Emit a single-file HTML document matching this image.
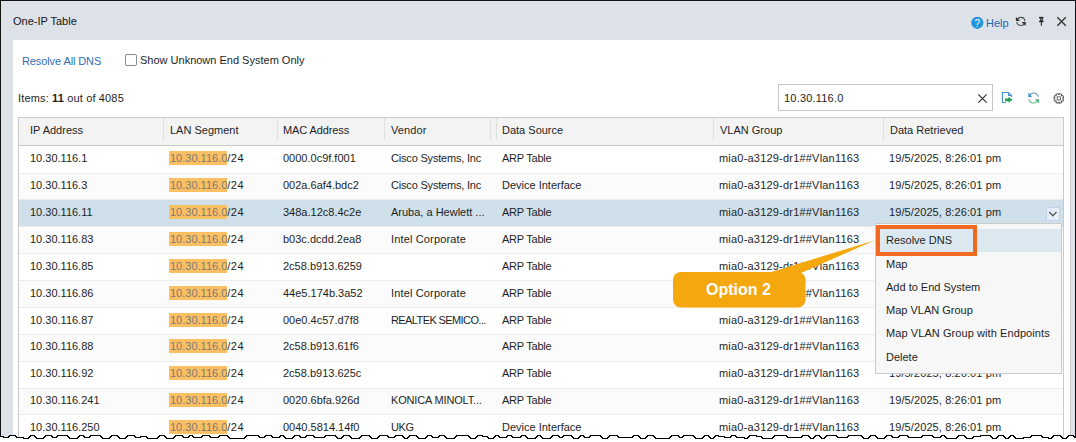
<!DOCTYPE html>
<html><head><meta charset="utf-8"><style>
*{margin:0;padding:0;box-sizing:border-box}
html,body{width:1076px;height:442px;overflow:hidden;background:#fff}
body{position:relative;font-family:"Liberation Sans",sans-serif;font-size:11px;color:#1e1e1e}
.t{position:absolute;white-space:nowrap;line-height:13px}
.num{letter-spacing:0.2px}
.abs{position:absolute}
.win{position:absolute;left:0;top:0;width:1076px;height:442px;background:#dde2e9;border-top:1px solid #111;border-left:1px solid #111;border-right:1px solid #111}
.panel{position:absolute;left:13px;top:40px;width:1058px;height:402px;background:#fff;border-right:1px solid #c8ccd2}
.tbl{position:absolute;left:18px;top:117px;width:1046px;height:330px;border:1px solid #c9c9c9;border-bottom:none}
.hdr{position:absolute;left:19px;top:118px;width:1044px;height:27px;background:#f3f3f3}
.hline{position:absolute;left:18px;top:145px;width:1046px;height:1px;background:#c9c9c9}
.vsep{position:absolute;top:118px;width:1px;height:23px;background:#e0e0e0}
.row{position:absolute;left:19px;width:1044px}
.sep{position:absolute;left:19px;width:1044px;height:1px;background:#ececec}
.hl{position:absolute;left:169px;width:58px;height:14px;background:#fcc062}
.hlt{color:#7d7a74}
.link{color:#2f6fb3}
.menu{position:absolute;left:875px;top:223px;width:187px;height:151px;background:#f7f7f7;border:1px solid #c9c9c9}
</style></head><body>
<div class="win"></div>
<div class="t" style="left:13px;top:15px;color:#141414">One-IP Table</div>
<svg class="abs" style="left:0;top:0" width="1076" height="40">
  <circle cx="977.3" cy="22.8" r="6.1" fill="#2394dc"/>
  <text x="977.4" y="26.5" text-anchor="middle" font-family="Liberation Sans" font-size="10" fill="#fff">?</text>
  <g fill="none" stroke="#4a4a4a" stroke-width="1.1">
    <path d="M1017.3,19.6 C1018.2,18 1019.5,17.4 1021,17.4 C1023.2,17.4 1024.6,18.8 1024.9,21.2"/>
    <path d="M1024.6,23.6 C1023.8,25.1 1022.6,25.5 1021,25.5 C1018.8,25.5 1017.2,24.4 1016.6,22.2"/>
  </g>
  <path d="M1015.9,16.9 L1015.9,21.1 L1020.1,21.1 Z" fill="#333"/>
  <path d="M1025.7,26.1 L1025.7,21.9 L1021.5,21.9 Z" fill="#333"/>
  <g>
    <rect x="1039" y="16.9" width="4.5" height="1.3" fill="#1e1e1e"/>
    <path d="M1040.4,18.2 L1042.6,18.2 L1042.6,20.8 L1040.4,20.8 Z" fill="#8a8a8a" stroke="#2a2a2a" stroke-width="0.8"/>
    <ellipse cx="1041.3" cy="21.4" rx="2.4" ry="0.95" fill="#1e1e1e"/>
    <rect x="1040.85" y="22.2" width="1.1" height="3.5" fill="#2a2a2a"/>
  </g>
  <g stroke="#333" stroke-width="1.3">
    <path d="M1057.3,17.3 L1065.8,25.8 M1065.8,17.3 L1057.3,25.8"/>
  </g>
</svg>
<div class="t link" style="left:986px;top:17px;color:#1d68ad">Help</div>
<div class="panel"></div>
<div class="t link" style="left:22px;top:55px;letter-spacing:-0.1px">Resolve All DNS</div>
<div style="position:absolute;left:125px;top:54px;width:12px;height:12px;border:1px solid #8a8a98;border-radius:2px;background:#fff"></div>
<div class="t" style="left:140px;top:54px">Show Unknown End System Only</div>
<div class="t" style="left:18px;top:92px;letter-spacing:0.15px">Items: <b>11</b> out of 4085</div>
<div style="position:absolute;left:778px;top:84px;width:215px;height:27px;border:1px solid #c6c6c6;background:#fff"></div>
<div class="t num" style="left:784px;top:92px">10.30.116.0</div>
<svg class="abs" style="left:970px;top:84px" width="106" height="30" viewBox="970 84 106 30">
  <path d="M978.3,94.3 L986.7,102.7 M986.7,94.3 L978.3,102.7" stroke="#333" stroke-width="1.2"/>
  <path d="M1006,102.5 L1002.5,102.5 L1002.5,92.5 L1008.5,92.5 L1011.5,95.5 L1011.5,97" fill="none" stroke="#4a90d0" stroke-width="1.1"/>
  <path d="M1008.5,92.5 L1008.5,95.5 L1011.5,95.5" fill="none" stroke="#4a90d0" stroke-width="1.1"/>
  <path d="M1005,98.4 L1008.5,98.4 L1008.5,96.8 L1012.6,99.8 L1008.5,102.8 L1008.5,101.2 L1005,101.2 Z" fill="#21a052"/>
  <path d="M1029.3,96 Q1030.8,93 1033.5,93 Q1036.8,93 1038.4,96.8" fill="none" stroke="#5a9cd6" stroke-width="1.1"/>
  <path d="M1028.3,92.6 L1028.3,96.9 L1032.2,96.9 Z" fill="#4a90d0"/>
  <path d="M1037.8,99.6 Q1036.5,103 1033.5,103 Q1030.2,103 1028.6,99.2" fill="none" stroke="#62c08e" stroke-width="1.1"/>
  <path d="M1038.9,103.6 L1038.9,99.2 L1034.9,99.2 Z" fill="#4cb880"/>
  <g transform="translate(1058.8,98.4) rotate(22.5)">
    <path d="M3.73,-1.14 L4.89,-1.04 L4.89,1.04 L3.73,1.14 L3.44,1.83 L4.19,2.72 L2.72,4.19 L1.83,3.44 L1.14,3.73 L1.04,4.89 L-1.04,4.89 L-1.14,3.73 L-1.83,3.44 L-2.72,4.19 L-4.19,2.72 L-3.44,1.83 L-3.73,1.14 L-4.89,1.04 L-4.89,-1.04 L-3.73,-1.14 L-3.44,-1.83 L-4.19,-2.72 L-2.72,-4.19 L-1.83,-3.44 L-1.14,-3.73 L-1.04,-4.89 L1.04,-4.89 L1.14,-3.73 L1.83,-3.44 L2.72,-4.19 L4.19,-2.72 L3.44,-1.83 Z" fill="none" stroke="#555" stroke-width="0.9"/>
    <rect x="-1.6" y="-1.6" width="3.2" height="3.2" fill="none" stroke="#606060" stroke-width="0.9" transform="rotate(-22.5)"/>
  </g>
</svg>
<div class="tbl"></div>
<div class="hdr"></div>
<div class="hline"></div>
<div class="vsep" style="left:163px"></div>
<div class="vsep" style="left:277px"></div>
<div class="vsep" style="left:384px"></div>
<div class="vsep" style="left:490px"></div>
<div class="vsep" style="left:496px"></div>
<div class="vsep" style="left:713px"></div>
<div class="vsep" style="left:883px"></div>
<div class="t" style="left:30px;top:124px;">IP Address</div>
<div class="t" style="left:170px;top:124px;">LAN Segment</div>
<div class="t" style="left:283px;top:124px;letter-spacing:-0.1px;">MAC Address</div>
<div class="t" style="left:391px;top:124px;letter-spacing:0.1px;">Vendor</div>
<div class="t" style="left:502px;top:124px;">Data Source</div>
<div class="t" style="left:720px;top:124px;">VLAN Group</div>
<div class="t" style="left:890px;top:124px;">Data Retrieved</div>
<div class="sep" style="top:173px"></div><div class="t" style="left:30px;top:152px;">10.30.116.1</div><div class="hl" style="top:151px"></div><div class="t" style="left:170px;top:152px;"><span class="hlt">10.30.116.0</span><span style="letter-spacing:0.5px">/24</span></div><div class="t" style="left:283px;top:152px;">0000.0c9f.f001</div><div class="t" style="left:391px;top:152px;letter-spacing:-0.19px;">Cisco Systems, Inc</div><div class="t" style="left:502px;top:152px;letter-spacing:-0.25px;">ARP Table</div><div class="t" style="left:719px;top:152px;letter-spacing:0.2px;">mia0-a3129-dr1##Vlan1163</div><div class="t" style="left:889px;top:152px;letter-spacing:0.1px;">19/5/2025, 8:26:01 pm</div><div class="row" style="top:174px;height:25px;background:#fbfbfb;"></div><div class="sep" style="top:199px"></div><div class="t" style="left:30px;top:179px;">10.30.116.3</div><div class="hl" style="top:178px"></div><div class="t" style="left:170px;top:179px;"><span class="hlt">10.30.116.0</span><span style="letter-spacing:0.5px">/24</span></div><div class="t" style="left:283px;top:179px;">002a.6af4.bdc2</div><div class="t" style="left:391px;top:179px;letter-spacing:-0.19px;">Cisco Systems, Inc</div><div class="t" style="left:502px;top:179px;">Device Interface</div><div class="t" style="left:719px;top:179px;letter-spacing:0.2px;">mia0-a3129-dr1##Vlan1163</div><div class="t" style="left:889px;top:179px;letter-spacing:0.1px;">19/5/2025, 8:26:01 pm</div><div class="row" style="top:200px;height:26px;background:#cfe0ea;"></div><div class="sep" style="top:226px"></div><div class="t" style="left:30px;top:206px;">10.30.116.11</div><div class="hl" style="top:205px"></div><div class="t" style="left:170px;top:206px;"><span class="hlt">10.30.116.0</span><span style="letter-spacing:0.5px">/24</span></div><div class="t" style="left:283px;top:206px;">348a.12c8.4c2e</div><div class="t" style="left:391px;top:206px;">Aruba, a Hewlett ...</div><div class="t" style="left:502px;top:206px;letter-spacing:-0.25px;">ARP Table</div><div class="t" style="left:719px;top:206px;letter-spacing:0.2px;">mia0-a3129-dr1##Vlan1163</div><div class="t" style="left:889px;top:206px;letter-spacing:0.1px;">19/5/2025, 8:26:01 pm</div><div class="row" style="top:227px;height:26px;background:#fbfbfb;"></div><div class="sep" style="top:253px"></div><div class="t" style="left:30px;top:233px;">10.30.116.83</div><div class="hl" style="top:232px"></div><div class="t" style="left:170px;top:233px;"><span class="hlt">10.30.116.0</span><span style="letter-spacing:0.5px">/24</span></div><div class="t" style="left:283px;top:233px;">b03c.dcdd.2ea8</div><div class="t" style="left:391px;top:233px;letter-spacing:0.15px;">Intel Corporate</div><div class="t" style="left:502px;top:233px;letter-spacing:-0.25px;">ARP Table</div><div class="t" style="left:719px;top:233px;letter-spacing:0.2px;">mia0-a3129-dr1##Vlan1163</div><div class="t" style="left:889px;top:233px;letter-spacing:0.1px;">19/5/2025, 8:26:01 pm</div><div class="sep" style="top:280px"></div><div class="t" style="left:30px;top:260px;">10.30.116.85</div><div class="hl" style="top:259px"></div><div class="t" style="left:170px;top:260px;"><span class="hlt">10.30.116.0</span><span style="letter-spacing:0.5px">/24</span></div><div class="t" style="left:283px;top:260px;">2c58.b913.6259</div><div class="t" style="left:502px;top:260px;letter-spacing:-0.25px;">ARP Table</div><div class="t" style="left:719px;top:260px;letter-spacing:0.2px;">mia0-a3129-dr1##Vlan1163</div><div class="t" style="left:889px;top:260px;letter-spacing:0.1px;">19/5/2025, 8:26:01 pm</div><div class="row" style="top:281px;height:26px;background:#fbfbfb;"></div><div class="sep" style="top:307px"></div><div class="t" style="left:30px;top:287px;">10.30.116.86</div><div class="hl" style="top:286px"></div><div class="t" style="left:170px;top:287px;"><span class="hlt">10.30.116.0</span><span style="letter-spacing:0.5px">/24</span></div><div class="t" style="left:283px;top:287px;">44e5.174b.3a52</div><div class="t" style="left:391px;top:287px;letter-spacing:0.15px;">Intel Corporate</div><div class="t" style="left:502px;top:287px;letter-spacing:-0.25px;">ARP Table</div><div class="t" style="left:719px;top:287px;letter-spacing:0.2px;">mia0-a3129-dr1##Vlan1163</div><div class="t" style="left:889px;top:287px;letter-spacing:0.1px;">19/5/2025, 8:26:01 pm</div><div class="sep" style="top:334px"></div><div class="t" style="left:30px;top:314px;">10.30.116.87</div><div class="hl" style="top:313px"></div><div class="t" style="left:170px;top:314px;"><span class="hlt">10.30.116.0</span><span style="letter-spacing:0.5px">/24</span></div><div class="t" style="left:283px;top:314px;">00e0.4c57.d7f8</div><div class="t" style="left:391px;top:314px;letter-spacing:-0.6px;">REALTEK SEMICO...</div><div class="t" style="left:502px;top:314px;letter-spacing:-0.25px;">ARP Table</div><div class="t" style="left:719px;top:314px;letter-spacing:0.2px;">mia0-a3129-dr1##Vlan1163</div><div class="t" style="left:889px;top:314px;letter-spacing:0.1px;">19/5/2025, 8:26:01 pm</div><div class="row" style="top:335px;height:26px;background:#fbfbfb;"></div><div class="sep" style="top:361px"></div><div class="t" style="left:30px;top:340px;">10.30.116.88</div><div class="hl" style="top:339px"></div><div class="t" style="left:170px;top:340px;"><span class="hlt">10.30.116.0</span><span style="letter-spacing:0.5px">/24</span></div><div class="t" style="left:283px;top:340px;">2c58.b913.61f6</div><div class="t" style="left:502px;top:340px;letter-spacing:-0.25px;">ARP Table</div><div class="t" style="left:719px;top:340px;letter-spacing:0.2px;">mia0-a3129-dr1##Vlan1163</div><div class="t" style="left:889px;top:340px;letter-spacing:0.1px;">19/5/2025, 8:26:01 pm</div><div class="sep" style="top:388px"></div><div class="t" style="left:30px;top:367px;">10.30.116.92</div><div class="hl" style="top:366px"></div><div class="t" style="left:170px;top:367px;"><span class="hlt">10.30.116.0</span><span style="letter-spacing:0.5px">/24</span></div><div class="t" style="left:283px;top:367px;">2c58.b913.625c</div><div class="t" style="left:502px;top:367px;letter-spacing:-0.25px;">ARP Table</div><div class="t" style="left:719px;top:367px;letter-spacing:0.2px;">mia0-a3129-dr1##Vlan1163</div><div class="t" style="left:889px;top:367px;letter-spacing:0.1px;">19/5/2025, 8:26:01 pm</div><div class="row" style="top:389px;height:25px;background:#fbfbfb;"></div><div class="sep" style="top:414px"></div><div class="t" style="left:30px;top:394px;">10.30.116.241</div><div class="hl" style="top:393px"></div><div class="t" style="left:170px;top:394px;"><span class="hlt">10.30.116.0</span><span style="letter-spacing:0.5px">/24</span></div><div class="t" style="left:283px;top:394px;">0020.6bfa.926d</div><div class="t" style="left:391px;top:394px;letter-spacing:-0.16px;">KONICA MINOLT...</div><div class="t" style="left:502px;top:394px;letter-spacing:-0.25px;">ARP Table</div><div class="t" style="left:719px;top:394px;letter-spacing:0.2px;">mia0-a3129-dr1##Vlan1163</div><div class="t" style="left:889px;top:394px;letter-spacing:0.1px;">19/5/2025, 8:26:01 pm</div><div class="t" style="left:30px;top:421px;">10.30.116.250</div><div class="hl" style="top:420px"></div><div class="t" style="left:170px;top:421px;"><span class="hlt">10.30.116.0</span><span style="letter-spacing:0.5px">/24</span></div><div class="t" style="left:283px;top:421px;">0040.5814.14f0</div><div class="t" style="left:391px;top:421px;letter-spacing:-0.4px;">UKG</div><div class="t" style="left:502px;top:421px;">Device Interface</div><div class="t" style="left:719px;top:421px;letter-spacing:0.2px;">mia0-a3129-dr1##Vlan1163</div><div class="t" style="left:889px;top:421px;letter-spacing:0.1px;">19/5/2025, 8:26:01 pm</div>
<div class="abs" style="left:1046px;top:207px;width:14px;height:14px;background:#e6edf8;border:1px solid #c3d2e8"></div>
<svg class="abs" style="left:1046px;top:207px" width="14" height="14"><path d="M3.3,5 L6.9,8.7 L10.5,5" fill="none" stroke="#595959" stroke-width="1.35"/></svg>
<div class="menu"></div>
<div class="abs" style="left:876px;top:229px;width:185px;height:23px;background:#dce8f0"></div>
<div class="abs" style="left:876px;top:225px;width:101px;height:31px;border:4px solid #f26a21"></div>
<div class="t" style="left:886px;top:234px;">Resolve DNS</div><div class="t" style="left:886px;top:258px;">Map</div><div class="t" style="left:886px;top:281px;">Add to End System</div><div class="t" style="left:886px;top:304px;">Map VLAN Group</div><div class="t" style="left:886px;top:327px;letter-spacing:0.08px;">Map VLAN Group with Endpoints</div><div class="t" style="left:886px;top:351px;">Delete</div>
<svg class="abs" style="left:0;top:0" width="1076" height="442">
  <path d="M768,273 L801,273 L875,240.2 Z" fill="#f5a80d"/>
  <rect x="673" y="272" width="132.5" height="35.5" rx="8" ry="8" fill="#f5a80d"/>
  <text x="706" y="295" font-family="Liberation Sans" font-weight="bold" font-size="16" fill="#fff">Option 2</text>
  <path d="M0,436.5 L3,436.5 L4,437.5 L8,437.5 L10,435.5 L15,435.5 L17,437.5 L23,437.5 L24,438.5 L28,438.5 L31,435.5 L34,435.5 L37,438.5 L43,438.5 L46,435.5 L51,435.5 L53,437.5 L56,437.5 L58,435.5 L67,435.5 L70,438.5 L77,438.5 L80,435.5 L83,435.5 L85,437.5 L89,437.5 L91,435.5 L100,435.5 L103,438.5 L109,438.5 L112,435.5 L117,435.5 L120,438.5 L125,438.5 L128,435.5 L134,435.5 L136,437.5 L140,437.5 L141,436.5 L146,436.5 L148,438.5 L157,438.5 L160,435.5 L164,435.5 L167,438.5 L173,438.5 L176,435.5 L182,435.5 L184,437.5 L188,437.5 L190,435.5 L192,435.5 L194,437.5 L201,437.5 L203,435.5 L209,435.5 L211,437.5 L218,437.5 L220,435.5 L227,435.5 L230,438.5 L234,438.5 L235,438.5 L244,438.5 L247,435.5 L252,435.5 L253,435.5 L258,435.5 L260,437.5 L264,437.5 L266,435.5 L271,435.5 L273,437.5 L279,437.5 L281,435.5 L283,435.5 L286,438.5 L292,438.5 L295,435.5 L299,435.5 L301,437.5 L305,437.5 L307,435.5 L313,435.5 L315,437.5 L320,437.5 L321,437.5 L324,437.5 L326,435.5 L335,435.5 L338,438.5 L341,438.5 L344,435.5 L349,435.5 L352,438.5 L359,438.5 L362,435.5 L369,435.5 L372,438.5 L377,438.5 L380,435.5 L387,435.5 L389,437.5 L394,437.5 L396,435.5 L402,435.5 L405,438.5 L407,438.5 L410,435.5 L416,435.5 L419,438.5 L425,438.5 L428,435.5 L431,435.5 L433,437.5 L438,437.5 L440,435.5 L444,435.5 L447,438.5 L454,438.5 L457,435.5 L463,435.5 L464,435.5 L468,435.5 L471,438.5 L475,438.5 L478,435.5 L482,435.5 L483,436.5 L487,436.5 L489,438.5 L493,438.5 L496,435.5 L498,435.5 L500,437.5 L506,437.5 L508,435.5 L511,435.5 L513,437.5 L520,437.5 L522,435.5 L525,435.5 L528,438.5 L535,438.5 L538,435.5 L540,435.5 L543,438.5 L550,438.5 L553,435.5 L558,435.5 L560,437.5 L562,437.5 L564,435.5 L571,435.5 L574,438.5 L578,438.5 L581,435.5 L583,435.5 L585,437.5 L589,437.5 L591,435.5 L600,435.5 L603,438.5 L607,438.5 L610,435.5 L617,435.5 L619,437.5 L625,437.5 L626,437.5 L632,437.5 L634,435.5 L638,435.5 L641,438.5 L645,438.5 L648,435.5 L653,435.5 L656,438.5 L659,438.5 L660,438.5 L669,438.5 L672,435.5 L678,435.5 L680,437.5 L682,437.5 L684,435.5 L693,435.5 L696,438.5 L702,438.5 L705,435.5 L708,435.5 L711,438.5 L713,438.5 L716,435.5 L718,435.5 L719,436.5 L724,436.5 L725,437.5 L730,437.5 L732,435.5 L735,435.5 L737,437.5 L744,437.5 L745,438.5 L747,438.5 L750,435.5 L756,435.5 L757,436.5 L761,436.5 L763,438.5 L772,438.5 L775,435.5 L779,435.5 L780,435.5 L786,435.5 L788,437.5 L791,437.5 L792,437.5 L801,437.5 L803,435.5 L808,435.5 L811,438.5 L813,438.5 L816,435.5 L819,435.5 L822,438.5 L824,438.5 L827,435.5 L836,435.5 L838,437.5 L847,437.5 L849,435.5 L851,435.5 L852,435.5 L861,435.5 L864,438.5 L868,438.5 L871,435.5 L875,435.5 L878,438.5 L884,438.5 L887,435.5 L891,435.5 L893,437.5 L898,437.5 L900,435.5 L907,435.5 L909,437.5 L915,437.5 L916,437.5 L921,437.5 L923,435.5 L932,435.5 L934,437.5 L940,437.5 L942,435.5 L944,435.5 L947,438.5 L956,438.5 L959,435.5 L964,435.5 L967,438.5 L972,438.5 L974,436.5 L980,436.5 L981,435.5 L990,435.5 L993,438.5 L996,438.5 L999,435.5 L1003,435.5 L1006,438.5 L1008,438.5 L1011,435.5 L1013,435.5 L1016,438.5 L1023,438.5 L1024,437.5 L1030,437.5 L1032,435.5 L1041,435.5 L1043,437.5 L1048,437.5 L1049,438.5 L1051,438.5 L1054,435.5 L1060,435.5 L1063,438.5 L1066,438.5 L1069,435.5 L1073,435.5 L1075,437.5 L1077,437.5 L1079,435.5 L1086,435.5 L1089,438.5 L1080,450 L0,450 Z" fill="#fff" shape-rendering="crispEdges"/>
  <path d="M0,436.5 L3,436.5 L4,437.5 L8,437.5 L10,435.5 L15,435.5 L17,437.5 L23,437.5 L24,438.5 L28,438.5 L31,435.5 L34,435.5 L37,438.5 L43,438.5 L46,435.5 L51,435.5 L53,437.5 L56,437.5 L58,435.5 L67,435.5 L70,438.5 L77,438.5 L80,435.5 L83,435.5 L85,437.5 L89,437.5 L91,435.5 L100,435.5 L103,438.5 L109,438.5 L112,435.5 L117,435.5 L120,438.5 L125,438.5 L128,435.5 L134,435.5 L136,437.5 L140,437.5 L141,436.5 L146,436.5 L148,438.5 L157,438.5 L160,435.5 L164,435.5 L167,438.5 L173,438.5 L176,435.5 L182,435.5 L184,437.5 L188,437.5 L190,435.5 L192,435.5 L194,437.5 L201,437.5 L203,435.5 L209,435.5 L211,437.5 L218,437.5 L220,435.5 L227,435.5 L230,438.5 L234,438.5 L235,438.5 L244,438.5 L247,435.5 L252,435.5 L253,435.5 L258,435.5 L260,437.5 L264,437.5 L266,435.5 L271,435.5 L273,437.5 L279,437.5 L281,435.5 L283,435.5 L286,438.5 L292,438.5 L295,435.5 L299,435.5 L301,437.5 L305,437.5 L307,435.5 L313,435.5 L315,437.5 L320,437.5 L321,437.5 L324,437.5 L326,435.5 L335,435.5 L338,438.5 L341,438.5 L344,435.5 L349,435.5 L352,438.5 L359,438.5 L362,435.5 L369,435.5 L372,438.5 L377,438.5 L380,435.5 L387,435.5 L389,437.5 L394,437.5 L396,435.5 L402,435.5 L405,438.5 L407,438.5 L410,435.5 L416,435.5 L419,438.5 L425,438.5 L428,435.5 L431,435.5 L433,437.5 L438,437.5 L440,435.5 L444,435.5 L447,438.5 L454,438.5 L457,435.5 L463,435.5 L464,435.5 L468,435.5 L471,438.5 L475,438.5 L478,435.5 L482,435.5 L483,436.5 L487,436.5 L489,438.5 L493,438.5 L496,435.5 L498,435.5 L500,437.5 L506,437.5 L508,435.5 L511,435.5 L513,437.5 L520,437.5 L522,435.5 L525,435.5 L528,438.5 L535,438.5 L538,435.5 L540,435.5 L543,438.5 L550,438.5 L553,435.5 L558,435.5 L560,437.5 L562,437.5 L564,435.5 L571,435.5 L574,438.5 L578,438.5 L581,435.5 L583,435.5 L585,437.5 L589,437.5 L591,435.5 L600,435.5 L603,438.5 L607,438.5 L610,435.5 L617,435.5 L619,437.5 L625,437.5 L626,437.5 L632,437.5 L634,435.5 L638,435.5 L641,438.5 L645,438.5 L648,435.5 L653,435.5 L656,438.5 L659,438.5 L660,438.5 L669,438.5 L672,435.5 L678,435.5 L680,437.5 L682,437.5 L684,435.5 L693,435.5 L696,438.5 L702,438.5 L705,435.5 L708,435.5 L711,438.5 L713,438.5 L716,435.5 L718,435.5 L719,436.5 L724,436.5 L725,437.5 L730,437.5 L732,435.5 L735,435.5 L737,437.5 L744,437.5 L745,438.5 L747,438.5 L750,435.5 L756,435.5 L757,436.5 L761,436.5 L763,438.5 L772,438.5 L775,435.5 L779,435.5 L780,435.5 L786,435.5 L788,437.5 L791,437.5 L792,437.5 L801,437.5 L803,435.5 L808,435.5 L811,438.5 L813,438.5 L816,435.5 L819,435.5 L822,438.5 L824,438.5 L827,435.5 L836,435.5 L838,437.5 L847,437.5 L849,435.5 L851,435.5 L852,435.5 L861,435.5 L864,438.5 L868,438.5 L871,435.5 L875,435.5 L878,438.5 L884,438.5 L887,435.5 L891,435.5 L893,437.5 L898,437.5 L900,435.5 L907,435.5 L909,437.5 L915,437.5 L916,437.5 L921,437.5 L923,435.5 L932,435.5 L934,437.5 L940,437.5 L942,435.5 L944,435.5 L947,438.5 L956,438.5 L959,435.5 L964,435.5 L967,438.5 L972,438.5 L974,436.5 L980,436.5 L981,435.5 L990,435.5 L993,438.5 L996,438.5 L999,435.5 L1003,435.5 L1006,438.5 L1008,438.5 L1011,435.5 L1013,435.5 L1016,438.5 L1023,438.5 L1024,437.5 L1030,437.5 L1032,435.5 L1041,435.5 L1043,437.5 L1048,437.5 L1049,438.5 L1051,438.5 L1054,435.5 L1060,435.5 L1063,438.5 L1066,438.5 L1069,435.5 L1073,435.5 L1075,437.5 L1077,437.5 L1079,435.5 L1086,435.5 L1089,438.5" fill="none" stroke="#000" stroke-width="1" shape-rendering="crispEdges"/>
</svg>
</body></html>
